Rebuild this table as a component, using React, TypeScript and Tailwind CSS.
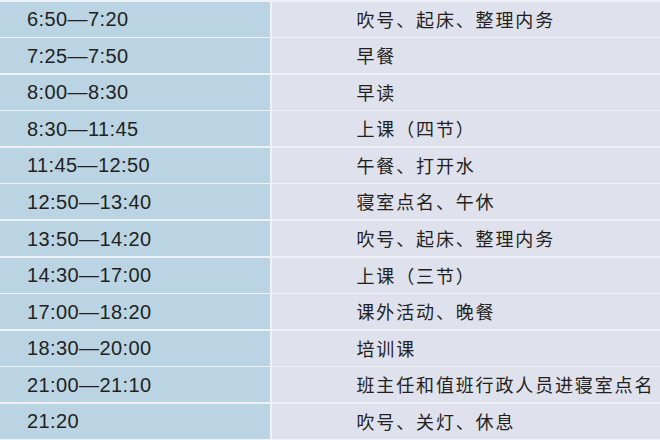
const rows: [string, string][] = [
  ["6:50—7:20", "吹号、起床、整理内务"],
  ["7:25—7:50", "早餐"],
  ["8:00—8:30", "早读"],
  ["8:30—11:45", "上课（四节）"],
  ["11:45—12:50", "午餐、打开水"],
  ["12:50—13:40", "寝室点名、午休"],
  ["13:50—14:20", "吹号、起床、整理内务"],
  ["14:30—17:00", "上课（三节）"],
  ["17:00—18:20", "课外活动、晚餐"],
  ["18:30—20:00", "培训课"],
  ["21:00—21:10", "班主任和值班行政人员进寝室点名"],
  ["21:20", "吹号、关灯、休息"],
];

export default function App() {
  return (
    <div className="w-[660px] h-[440px] bg-[#eef2f6] flex flex-col gap-[1.5px] pt-[1.5px] pb-[1px] overflow-hidden text-[#231f20]">
      {rows.map(([time, what]) => (
        <div key={time} className="flex-1 grid grid-cols-[270px_1fr] gap-x-[1.5px]">
          <div className="bg-[#bad4e3] flex items-center pl-[27px] text-[20px] tracking-[0.4px] font-['Liberation_Sans',Arial,sans-serif]">
            {time}
          </div>
          <div className="bg-[#dfe1ed] flex items-center pl-[85px] text-[18px] tracking-[1.85px] font-['Noto_Sans_CJK_SC',sans-serif]">
            {what}
          </div>
        </div>
      ))}
    </div>
  );
}
